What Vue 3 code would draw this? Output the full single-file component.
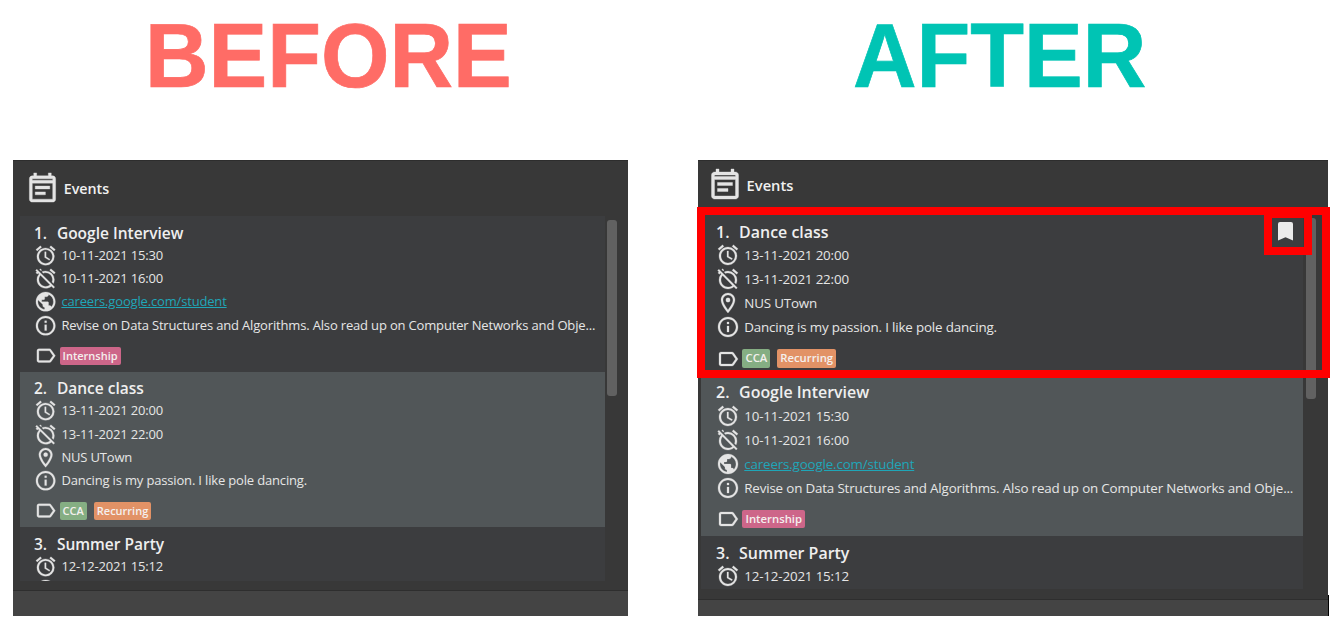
<script setup>
const icons = {
  note: 'M19 4h-1V2h-2v2H8V2H6v2H5c-1.1 0-2 .9-2 2v14c0 1.1.9 2 2 2h14c1.1 0 2-.9 2-2V6c0-1.1-.9-2-2-2zm0 16H5V9h14v11zm0-13H5V6h14v1zM17 11H7v2h10v-2zm-3 4H7v2h7v-2z',
  start: 'M22 5.72l-4.6-3.86-1.29 1.53 4.6 3.86L22 5.72zM7.88 3.39L6.6 1.86 2 5.71l1.29 1.53 4.59-3.85zM12.5 8H11v6l4.75 2.85.75-1.23-4-2.37V8zM12 4c-4.97 0-9 4.03-9 9s4.02 9 9 9a9 9 0 0 0 0-18zm0 16c-3.87 0-7-3.13-7-7s3.13-7 7-7 7 3.13 7 7-3.13 7-7 7z',
  end: 'M12 6c3.87 0 7 3.13 7 7 0 .84-.16 1.65-.43 2.4l1.52 1.52c.58-1.19.91-2.51.91-3.92a9 9 0 0 0-9-9c-1.41 0-2.73.33-3.92.91L9.6 6.43C10.35 6.16 11.16 6 12 6zm10-.28l-4.6-3.86-1.29 1.53 4.6 3.86L22 5.72zM2.92 2.29L1.65 3.57 2.98 4.9l-1.11.93 1.42 1.42 1.11-.94.8.8A8.96 8.96 0 0 0 3 13c0 4.97 4.02 9 9 9 2.25 0 4.31-.83 5.89-2.2l2.2 2.2 1.27-1.27L3.89 3.27l-.97-.98zm13.55 16.1C15.26 19.39 13.7 20 12 20c-3.87 0-7-3.13-7-7 0-1.7.61-3.26 1.61-4.47l9.86 9.86zM8.02 3.28L6.6 1.86l-.86.71 1.42 1.42.86-.71z',
  web: 'M12 2C6.48 2 2 6.48 2 12s4.48 10 10 10 10-4.48 10-10S17.52 2 12 2zm-1 17.93c-3.95-.49-7-3.85-7-7.93 0-.62.08-1.21.21-1.79L9 15v1c0 1.1.9 2 2 2v1.93zm6.9-2.54c-.26-.81-1-1.39-1.9-1.39h-1v-3c0-.55-.45-1-1-1H8v-2h2c.55 0 1-.45 1-1V7h2c1.1 0 2-.9 2-2v-.41c2.93 1.19 5 4.06 5 7.41 0 2.08-.8 3.97-2.1 5.39z',
  place: 'M12 2C8.13 2 5 5.13 5 9c0 5.25 7 13 7 13s7-7.75 7-13c0-3.87-3.13-7-7-7zM7 9c0-2.76 2.24-5 5-5s5 2.24 5 5c0 2.88-2.88 7.19-5 9.88C9.92 16.21 7 11.85 7 9zM12 6.8a2.2 2.2 0 1 0 0 4.4 2.2 2.2 0 0 0 0-4.4z',
  info: 'M11 7h2v2h-2zm0 4h2v6h-2zm1-9C6.48 2 2 6.48 2 12s4.48 10 10 10 10-4.48 10-10S17.52 2 12 2zm0 18c-4.41 0-8-3.59-8-8s3.59-8 8-8 8 3.59 8 8-3.59 8-8 8z',
  label: 'M17.63 5.84C17.27 5.33 16.67 5 16 5L5 5.01C3.9 5.01 3 5.9 3 7v10c0 1.1.9 1.99 2 1.99L16 19c.67 0 1.27-.33 1.63-.84L22 12l-4.37-6.16zM16 17H5V7h11l3.55 5L16 17z',
}

const google = {
  name: 'Google Interview',
  rows: [
    ['start', '10-11-2021 15:30'],
    ['end', '10-11-2021 16:00'],
    ['web', 'careers.google.com/student'],
    ['info', 'Revise on Data Structures and Algorithms. Also read up on Computer Networks and Obje...'],
  ],
  tags: [['Internship', 'pink']],
}
const dance = {
  name: 'Dance class',
  rows: [
    ['start', '13-11-2021 20:00'],
    ['end', '13-11-2021 22:00'],
    ['place', 'NUS UTown'],
    ['info', 'Dancing is my passion. I like pole dancing.'],
  ],
  tags: [['CCA', 'green'], ['Recurring', 'orange']],
}
const party = { name: 'Summer Party', rows: [['start', '12-12-2021 15:12'], ['info', '']], tags: [] }

const panels = [
  { id: 'before', title: 'BEFORE', events: [google, dance, party] },
  { id: 'after', title: 'AFTER', events: [dance, google, party] },
]
</script>

<template>
  <main class="page">
    <section v-for="p in panels" :key="p.id" class="side" :class="p.id">
      <h1><span>{{ p.title }}</span></h1>
      <div class="panel">
        <header>
          <svg viewBox="0 0 24 24"><path :d="icons.note" /></svg>
          <span>Events</span>
        </header>
        <div class="body">
          <div class="list">
            <article v-for="(e, i) in p.events" :key="e.name">
              <h2><span class="num">{{ i + 1 }}.</span>{{ e.name }}</h2>
              <div v-for="r in e.rows" :key="r[0]" class="row">
                <svg viewBox="0 0 24 24"><path :d="icons[r[0]]" /></svg>
                <span :class="{ link: r[0] === 'web' }">{{ r[1] }}</span>
              </div>
              <div v-if="e.tags.length" class="tags">
                <svg viewBox="0 0 24 24"><path :d="icons.label" /></svg>
                <span v-for="t in e.tags" :key="t[0]" class="tag" :class="t[1]">{{ t[0] }}</span>
              </div>
            </article>
          </div>
          <div class="thumb"></div>
        </div>
        <footer></footer>
        <template v-if="p.id === 'after'">
          <div class="mark-card"></div>
          <div class="mark-pin">
            <svg viewBox="0 0 15 19"><path d="M2 0h11q2 0 2 2v16.5L7.500 15.300 0 18.500V2q0-2 2-2z" /></svg>
          </div>
          <div class="edge"></div>
        </template>
      </div>
    </section>
  </main>
</template>

<style>
body { background: #fff; overflow: hidden; }
</style>

<style scoped>
.page {
  display: flex;
  gap: 70px;
  width: 1341px;
  height: 623px;
  padding-left: 13px;
  box-sizing: border-box;
  overflow: hidden;
  font-family: "Open Sans", "Noto Sans", sans-serif;
}
.side { flex: none; }
.before {
  --w: 615px; --head: 56px; --list-h: 365px; --left: 6.5px; --list-w: 585px;
  --card: 155.5px; --row: 23.3px; --fs: 13px; --title: 15.5px; --indent: 14.4px;
  --top: 5.8px; --title-h: 22px; --tag-fs: 11px; --tag-h: 18px; --tag-gap: 7px;
  --icon: 35px; --head-pad: 11.7px; --head-fs: 14.3px; --thumb-h: 176px; --thumb-top: 4px; --foot: 25px;
  --ink: #ff6c66;
}
.after {
  --w: 630px; --head: 55px; --list-h: 374px; --left: 3px; --list-w: 602px;
  --card: 160.4px; --row: 24px; --fs: 13.37px; --title: 15.95px; --indent: 15.1px;
  --top: 6px; --title-h: 22.3px; --tag-fs: 11.3px; --tag-h: 18.5px; --tag-gap: 7.4px;
  --icon: 36px; --head-pad: 8.6px; --head-fs: 14.7px; --thumb-h: 181px; --thumb-top: 3px; --foot: 16px;
  --ink: #00c4b4;
}
h1 {
  box-sizing: border-box;
  height: 160px;
  margin: 0;
  font: bold 88px/112px "Liberation Sans", Arial, sans-serif;
  font-kerning: none;
  color: var(--ink);
  -webkit-text-stroke: 0.7px var(--ink);
}
h1 span { display: inline-block; transform: scaleY(1.03); }
.before h1 { padding-left: 132px; }
.after h1 { padding-left: 155px; }
.panel {
  position: relative;
  display: flex;
  flex-direction: column;
  width: var(--w);
  height: 456px;
  background: #383838;
  box-shadow: inset 0 1px #2d2d2d;
  color: #e6e6e6;
}
svg { display: block; flex: none; fill: #e4e4e4; stroke: #e4e4e4; stroke-width: 0.25; }
header {
  display: flex;
  align-items: center;
  gap: 4px;
  height: var(--head);
  padding: 0 0 2px var(--head-pad);
  font-size: var(--head-fs);
  font-weight: 600;
  color: #f0f0f0;
  box-sizing: border-box;
}
.after header { padding-bottom: 7px; }
header svg { width: var(--icon); height: var(--icon); }
header span { position: relative; top: 1px; }
.body { display: flex; gap: 2.5px; padding-left: var(--left); flex: 1; }
.list { width: var(--list-w); height: var(--list-h); overflow: hidden; }
article {
  height: var(--card);
  padding: var(--top) 0 0 var(--indent);
  box-sizing: border-box;
  background: #3c3d3f;
}
article:nth-child(even) { background: #515658; }
h2 {
  display: flex;
  height: var(--title-h);
  margin: 0;
  font-size: var(--title);
  font-weight: 600;
  line-height: 23.4px;
  color: #efefef;
}
.num { width: 23px; }
.row {
  display: flex;
  align-items: center;
  gap: 4.2px;
  height: var(--row);
  font-size: var(--fs);
  line-height: var(--row);
  letter-spacing: -0.165px;
  white-space: nowrap;
}
.row svg, .tags svg { width: var(--row); height: var(--row); }
.link { color: #1fa6b8; text-decoration: underline; }
.tags { display: flex; align-items: center; margin-top: var(--tag-gap); height: var(--row); }
.tag {
  height: var(--tag-h);
  margin: 0 7px 0 0;
  padding: 0 3px;
  border-radius: 2px;
  font-size: var(--tag-fs);
  font-weight: 600;
  line-height: var(--tag-h);
  color: #f4f0ee;
}
.tags svg { margin-right: 2.4px; }
.pink { background: #cd6689; }
.green { background: #85ae83; }
.orange { background: #e29266; }
.thumb {
  width: 10px;
  height: var(--thumb-h);
  margin-top: var(--thumb-top);
  border-radius: 3px;
  background: #616161;
}
footer { height: var(--foot); border-top: 1px solid #2e2e2e; background: #444; }
.mark-card, .mark-pin { position: absolute; border: 8px solid #f00; box-sizing: border-box; }
.mark-card { left: -1px; top: 47px; width: 633px; height: 171px; }
.mark-pin { left: 566px; top: 50px; width: 48px; height: 45px; padding: 4px 0 0 6px; }
.mark-pin svg { width: 15px; height: 19px; fill: #ebebeb; stroke: none; }
.edge { position: absolute; left: 630px; top: 435px; width: 1px; height: 21px; background: #000; }
</style>
